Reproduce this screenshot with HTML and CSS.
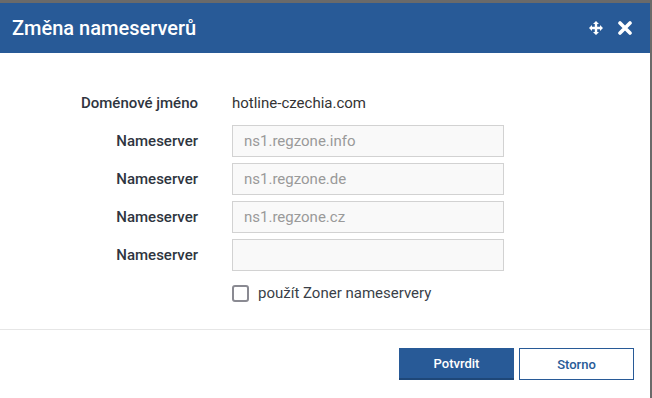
FILE: index.html
```html
<!DOCTYPE html>
<html lang="cs">
<head>
    <meta charset="UTF-8">
    <meta name="viewport" content="width=device-width, initial-scale=1.0">
    <title>Změna nameserverů</title>
    <link rel="stylesheet" href="styles.css">
</head>
<body>
    <div class="modal">
        <div class="modal-header">
            <h1>Změna nameserverů</h1>
            <div class="header-tools">
                <svg class="icon-move" width="14" height="14" viewBox="0 0 14 14">
                    <path d="M7 0 L10 3 H8.2 V5.8 H11 V4 L14 7 L11 10 V8.2 H8.2 V11 H10 L7 14 L4 11 H5.8 V8.2 H3 V10 L0 7 L3 4 V5.8 H5.8 V3 H4 Z" fill="#fff"/>
                </svg>
                <svg class="icon-close" width="14" height="14" viewBox="0 0 14 14">
                    <path d="M2 2 L12 12 M12 2 L2 12" stroke="#fff" stroke-width="3.6" stroke-linecap="round"/>
                </svg>
            </div>
        </div>

        <div class="modal-body">
            <div class="form-grid">
                <label class="label">Doménové jméno</label>
                <div class="value">hotline-czechia.com</div>

                <label class="label">Nameserver</label>
                <input class="field" type="text" placeholder="ns1.regzone.info">

                <label class="label">Nameserver</label>
                <input class="field" type="text" placeholder="ns1.regzone.de">

                <label class="label">Nameserver</label>
                <input class="field" type="text" placeholder="ns1.regzone.cz">

                <label class="label">Nameserver</label>
                <input class="field" type="text">

                <div></div>
                <label class="check">
                    <span class="check-box"></span>
                    použít Zoner nameservery
                </label>
            </div>
        </div>

        <div class="modal-footer">
            <button class="btn btn-primary">Potvrdit</button>
            <button class="btn btn-outline">Storno</button>
        </div>
    </div>
</body>
</html>
```

FILE: styles.css
```css
body {
    margin: 0;
    padding-top: 3px;
    background-color: #6a6a6a;
    font-family: Roboto, "Liberation Sans", sans-serif;
    color: #333a44;
    height: 395px;
    overflow: hidden;
}
.modal {
    width: 650px;
    background: #fff;
    height: 395px;
}
.modal-header {
    height: 50px;
    background: #285a97;
    display: flex;
    align-items: center;
    justify-content: space-between;
    padding: 0 18px 0 12px;
}
.modal-header h1 {
    margin: 0;
    color: #fff;
    font-size: 20px;
    font-weight: 500;
}
.header-tools {
    display: flex;
    align-items: center;
    gap: 15px;
}
.modal-body {
    padding: 34px 0 20px;
    border-bottom: 1px solid #e6e6e6;
}
.form-grid {
    display: grid;
    grid-template-columns: 198px 272px;
    grid-auto-rows: 32px;
    column-gap: 34px;
    row-gap: 6px;
    align-items: center;
}
.label {
    text-align: right;
    font-size: 15px;
    font-weight: 500;
    color: #2f3540;
}
.value {
    font-size: 15px;
    color: #333;
}
.field {
    box-sizing: border-box;
    width: 272px;
    height: 32px;
    border: 1px solid #d2d2d2;
    background: #f9f9f9;
    padding: 0 11px;
    font-family: inherit;
    font-size: 15px;
    color: #333;
}
.field::placeholder {
    color: #9a9a9a;
}
.check {
    display: flex;
    align-items: center;
    gap: 9px;
    font-size: 15px;
    color: #3a3f48;
}
.check-box {
    box-sizing: border-box;
    width: 17px;
    height: 17px;
    border: 2px solid #8a8a92;
    border-radius: 3px;
}
.modal-footer {
    display: flex;
    justify-content: flex-end;
    gap: 5px;
    padding: 18px 16px 0;
}
.btn {
    box-sizing: border-box;
    width: 115px;
    height: 32px;
    font-family: inherit;
    font-size: 13px;
    font-weight: 500;
    cursor: pointer;
}
.btn-primary {
    background: #285a97;
    color: #fff;
    border: none;
    border-bottom: 2px solid #1e4778;
}
.btn-outline {
    background: #fff;
    color: #285a97;
    border: 1px solid #285a97;
}
```
